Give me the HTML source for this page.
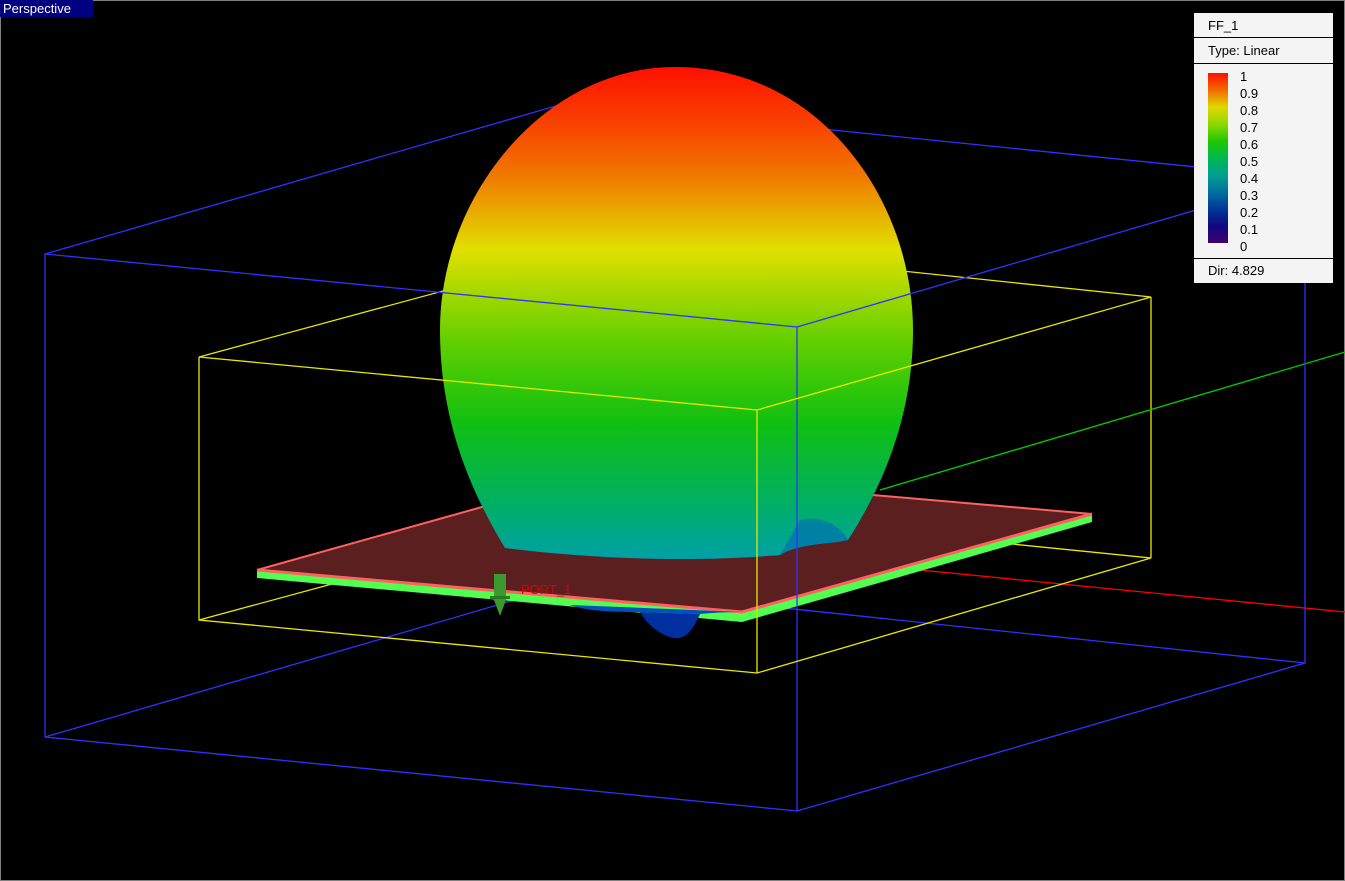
<!DOCTYPE html>
<html><head><style>
html,body{margin:0;padding:0;background:#000;width:1345px;height:881px;overflow:hidden}
.t{font-family:"Liberation Sans",sans-serif;font-size:13px}
</style></head><body>
<svg width="1345" height="881" xmlns="http://www.w3.org/2000/svg" style="position:absolute;left:0;top:0">
<defs>
<linearGradient id="ball" x1="0" y1="67" x2="0" y2="560" gradientUnits="userSpaceOnUse">
<stop offset="0" stop-color="#ff1000"/>
<stop offset="0.12" stop-color="#f84400"/>
<stop offset="0.22" stop-color="#f07800"/>
<stop offset="0.37" stop-color="#e0e000"/>
<stop offset="0.55" stop-color="#66d000"/>
<stop offset="0.72" stop-color="#10c010"/>
<stop offset="0.88" stop-color="#00b060"/>
<stop offset="1" stop-color="#00a0a8"/>
</linearGradient>
<linearGradient id="leg" x1="0" y1="0" x2="0" y2="1">
<stop offset="0" stop-color="#ff1000"/>
<stop offset="0.1" stop-color="#f26a00"/>
<stop offset="0.2" stop-color="#e0d800"/>
<stop offset="0.3" stop-color="#90d800"/>
<stop offset="0.4" stop-color="#20c800"/>
<stop offset="0.5" stop-color="#00b850"/>
<stop offset="0.6" stop-color="#00a090"/>
<stop offset="0.7" stop-color="#0070a0"/>
<stop offset="0.8" stop-color="#003898"/>
<stop offset="0.9" stop-color="#100880"/>
<stop offset="1" stop-color="#400070"/>
</linearGradient>
</defs>
<rect x="0.5" y="0.5" width="1344" height="880" fill="none" stroke="#808080"/>
<g stroke-width="1.3" fill="none">
<path stroke="#3030ff" d="M45,254 L566,103 L1305,178 M45,737 L566,585 L1305,663"/>
<path stroke="#e8e800" d="M199,357 L624,242 L1151,297 M199,620 L624,505 L1151,558 M1151,297 L1151,558"/>
<path stroke="#00d000" d="M880,490 L1345,352"/>
<path stroke="#ff0000" d="M900,568 L1345,612"/>
</g>
<polygon points="257,570 607,472 1092,514 742,612" fill="#5c1f1f"/>
<polygon points="257,570 742,612 1092,514 1092,522 742,622 257,578" fill="#50ff50"/>
<polyline points="257,570 742,612 1092,514" fill="none" stroke="#ff6060" stroke-width="3"/>
<polyline points="257,570 607,472 1092,514" fill="none" stroke="#ff6060" stroke-width="2"/>
<path d="M640,612 C650,630 670,640 680,638 C690,635 695,625 700,614 Z" fill="#0030a0"/>
<path d="M570,605 C590,612 620,612 640,612 L700,614 C720,612 740,612 742,612 Z" fill="#0050c0"/>
<path d="M675,67 C820,67 913,200 913,330 C913,420 880,490 848,540 C825,545 800,543 780,555 C700,562 600,560 505,548 C470,490 440,420 440,330 C440,195 545,67 675,67 Z" fill="url(#ball)"/>
<path d="M800,520 C820,515 840,525 848,540 C825,545 800,543 780,555 Z" fill="#0070b0" opacity="0.7"/>
<g stroke-width="1.3" fill="none">
<path stroke="#3030ff" d="M45,254 L797,327 L1305,178 L1305,663 L797,811 L45,737 Z M797,327 L797,811"/>
<path stroke="#e8e800" d="M199,357 L757,410 L1151,297 M199,357 L199,620 L757,673 L1151,558 M757,410 L757,673"/>
</g>
<rect x="494" y="574" width="12" height="26" fill="#3a9a30"/>
<rect x="490" y="596" width="20" height="3" fill="#2a7a20"/>
<polygon points="494,600 506,600 500,616" fill="#3a9a30"/>
<text x="521" y="594" class="t" fill="#e00000" font-size="12">PORT_1</text>
<rect x="0" y="0" width="93" height="17" fill="#000080"/>
<text x="3" y="13" class="t" fill="#fff">Perspective</text>
<rect x="1194" y="13" width="139" height="270" fill="#f4f4f4"/>
<line x1="1194" y1="37.5" x2="1333" y2="37.5" stroke="#000"/>
<line x1="1194" y1="63.5" x2="1333" y2="63.5" stroke="#000"/>
<line x1="1194" y1="258.5" x2="1333" y2="258.5" stroke="#000"/>
<rect x="1208" y="73" width="20" height="170" fill="url(#leg)"/>
<g class="t" fill="#000">
<text x="1208" y="30">FF_1</text>
<text x="1208" y="55">Type: Linear</text>
<text x="1208" y="275">Dir: 4.829</text>
<text x="1240" y="81">1</text>
<text x="1240" y="98">0.9</text>
<text x="1240" y="115">0.8</text>
<text x="1240" y="132">0.7</text>
<text x="1240" y="149">0.6</text>
<text x="1240" y="166">0.5</text>
<text x="1240" y="183">0.4</text>
<text x="1240" y="200">0.3</text>
<text x="1240" y="217">0.2</text>
<text x="1240" y="234">0.1</text>
<text x="1240" y="251">0</text>
</g>
</svg>
</body></html>
